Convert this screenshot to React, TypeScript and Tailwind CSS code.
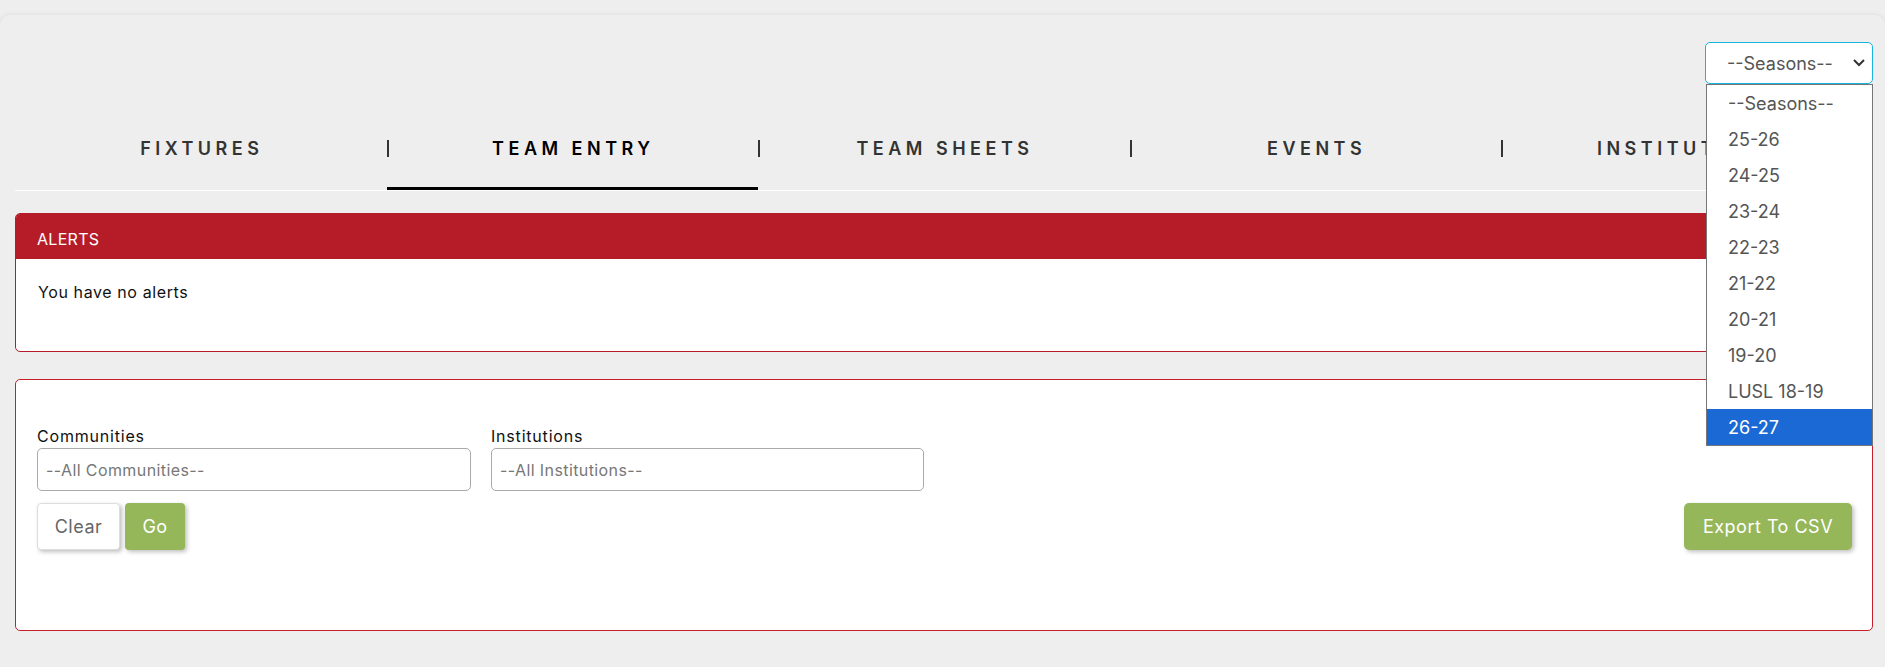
import { useState } from "react";

const tabs = ["Fixtures", "Team Entry", "Team Sheets", "Events", "Institutions"];

const seasons = [
  "--Seasons--",
  "25-26",
  "24-25",
  "23-24",
  "22-23",
  "21-22",
  "20-21",
  "19-20",
  "LUSL 18-19",
  "26-27",
];

function SeasonPicker() {
  const [open] = useState(true);
  const [hovered] = useState("26-27");

  return (
    <div className="relative w-[168px]">
      <div className="flex h-[42px] items-center justify-between rounded-[5px] border border-[#1ab4e2] bg-white pl-[21px] pr-[6px] text-[18px] text-[#555]">
        <span>--Seasons--</span>
        <svg width="12" height="8" viewBox="0 0 12 8" className="mr-[1px]">
          <polyline points="1,1 6,6 11,1" fill="none" stroke="#333" strokeWidth="2" />
        </svg>
      </div>

      {open && (
        <ul className="absolute left-[1px] right-0 top-[42px] z-10 border border-[#767676] bg-white">
          {seasons.map((s) => (
            <li
              key={s}
              className={`flex h-[36px] items-center pl-[21px] text-[18px] ${
                s === hovered ? "bg-[#1a69d4] text-white" : "text-[#555]"
              }`}
            >
              {s}
            </li>
          ))}
        </ul>
      )}
    </div>
  );
}

export default function App() {
  const active = "Team Entry";

  return (
    <div className="min-h-screen bg-[#eeeeee] pt-[15px] font-['Inter','Liberation_Sans',sans-serif]">
      <div className="min-h-[652px] rounded-t-[10px] bg-[#eeeeee] pl-[15px] pr-[12px] pt-[27px] shadow-[0_0_5px_rgba(0,0,0,0.09)]">
        <div className="flex justify-end">
          <SeasonPicker />
        </div>

        {/* tab strip */}
        <div className="mt-[26px] flex border-b border-white">
          {tabs.map((t, i) => (
            <div key={t} className="flex flex-1 flex-col">
              <div className="flex h-[77px] items-center">
                {i > 0 ? (
                  <span className="h-[17px] w-[2px] bg-[#333]" />
                ) : (
                  <span className="w-[2px]" />
                )}
                <span
                  className={`flex-1 text-center text-[18px] font-semibold uppercase tracking-[4.5px] ${
                    t === active ? "text-black" : "text-[#333]"
                  }`}
                >
                  {t}
                </span>
              </div>
              <div className={`h-[3px] ${t === active ? "bg-black" : ""}`} />
            </div>
          ))}
        </div>

        {/* alerts */}
        <div className="mt-[22px] overflow-hidden rounded-[5px] border border-[#b61c28] bg-white">
          <div className="flex h-[45px] items-center bg-[#b61c28] pl-[21px] pt-[5px] text-[16px] tracking-[0.3px] text-white">
            ALERTS
          </div>
          <div className="h-[92px] pl-[22px] pt-[21px] text-[16px] tracking-[0.6px] text-[#111]">
            You have no alerts
          </div>
        </div>

        {/* filters */}
        <div className="mt-[27px] h-[252px] rounded-[5px] border border-[#c4202c] bg-white pl-[21px] pr-[20px] pt-[46px]">
          <div className="flex gap-[20px]">
            <div className="w-[434px]">
              <label className="block text-[16px] leading-[21px] tracking-[0.8px] text-[#111]">Communities</label>
              <div className="mt-[1px] flex h-[43px] items-center rounded-[5px] border border-[#aaa] pl-[8px] text-[16px] tracking-[0.4px] text-[#777]">
                --All Communities--
              </div>
            </div>
            <div className="w-[433px]">
              <label className="block text-[16px] leading-[21px] tracking-[0.8px] text-[#111]">Institutions</label>
              <div className="mt-[1px] flex h-[43px] items-center rounded-[5px] border border-[#aaa] pl-[8px] text-[16px] tracking-[0.4px] text-[#777]">
                --All Institutions--
              </div>
            </div>
          </div>

          <div className="mt-[12px] flex items-center justify-between">
            <div className="flex gap-[5px]">
              <button className="h-[47px] w-[83px] rounded-[4px] border border-[#ddd] bg-white text-[18px] tracking-[0.5px] text-[#666] shadow-[2px_2px_4px_rgba(0,0,0,0.25)]">
                Clear
              </button>
              <button className="h-[47px] w-[60px] rounded-[4px] bg-[#95b75a] text-[18px] tracking-[0.5px] text-white shadow-[2px_2px_4px_rgba(0,0,0,0.25)]">
                Go
              </button>
            </div>
            <button className="h-[47px] w-[168px] rounded-[5px] bg-[#95b75a] text-[18px] tracking-[0.5px] text-white shadow-[2px_2px_4px_rgba(0,0,0,0.25)]">
              Export To CSV
            </button>
          </div>
        </div>
      </div>
    </div>
  );
}
